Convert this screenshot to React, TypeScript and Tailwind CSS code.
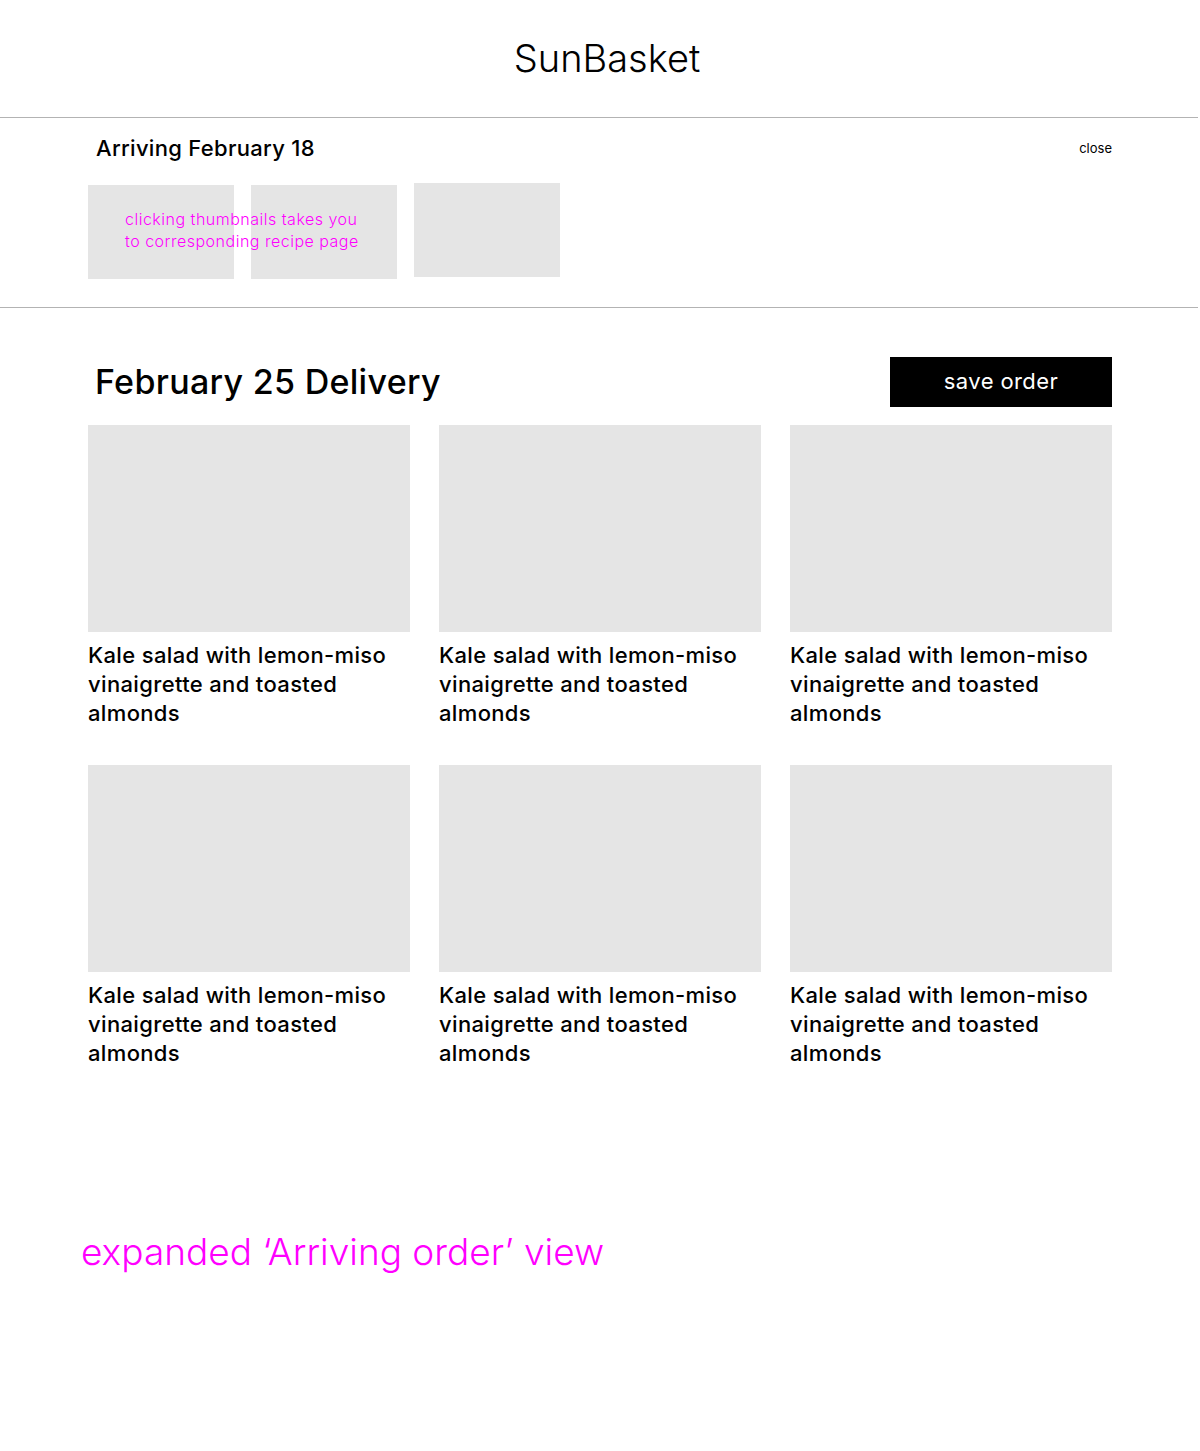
import React from "react";

function Card() {
  return (
    <div className="flex flex-col">
      <div className="h-[207px] bg-[#e5e5e5]" />
      <p className="mt-[9px] text-[22px] leading-[29px] font-medium tracking-[0.35px] text-black">
        Kale salad with lemon-miso vinaigrette and toasted almonds
      </p>
    </div>
  );
}

export default function App() {
  return (
    <div className="w-[1200px] min-h-[1451px] bg-white text-black font-['Inter',sans-serif]">
      <header className="h-[117px] flex items-center justify-center">
        <h1 className="text-[38px] font-light pl-[14px]">SunBasket</h1>
      </header>
      <div className="w-[1198px] h-px bg-[#b3b3b3]" />
      <section className="h-[189px] px-[88px] relative">
        <div className="flex items-center justify-between pt-[17px] pl-[8px]">
          <h2 className="text-[22px] font-medium leading-[26px] tracking-[0.3px]">Arriving February 18</h2>
          <button className="text-[13px] mt-[2px]">close</button>
        </div>
        <div className="flex items-start gap-[17px] mt-[22px]">
          <div className="w-[146px] h-[94px] bg-[#e5e5e5] mt-[2px]" />
          <div className="w-[146px] h-[94px] bg-[#e5e5e5] mt-[2px]" />
          <div className="w-[146px] h-[94px] bg-[#e5e5e5]" />
        </div>
        <p className="absolute left-[125px] top-[90px] text-[16px] leading-[22px] tracking-[0.5px] text-[#ff00ff] font-light">
          clicking thumbnails takes you
          <br />
          to corresponding recipe page
        </p>
      </section>
      <div className="w-[1198px] h-px bg-[#b3b3b3]" />
      <main className="px-[88px] pt-[49px]">
        <div className="flex items-center justify-between h-[50px]">
          <h2 className="text-[34px] font-medium pl-[7px] -mt-[2px] tracking-[0.3px]">February 25 Delivery</h2>
          <button className="w-[222px] h-[50px] bg-black text-white text-[22px] tracking-[0.4px] pb-[1px]">save order</button>
        </div>
        <div className="grid grid-cols-3 gap-x-[29px] gap-y-[37px] mt-[18px]">
          <Card />
          <Card />
          <Card />
          <Card />
          <Card />
          <Card />
        </div>
        <p className="mt-[156px] -ml-[7px] text-[37px] font-light text-[#ff00ff]">
          expanded ‘Arriving order’ view
        </p>
      </main>
    </div>
  );
}
